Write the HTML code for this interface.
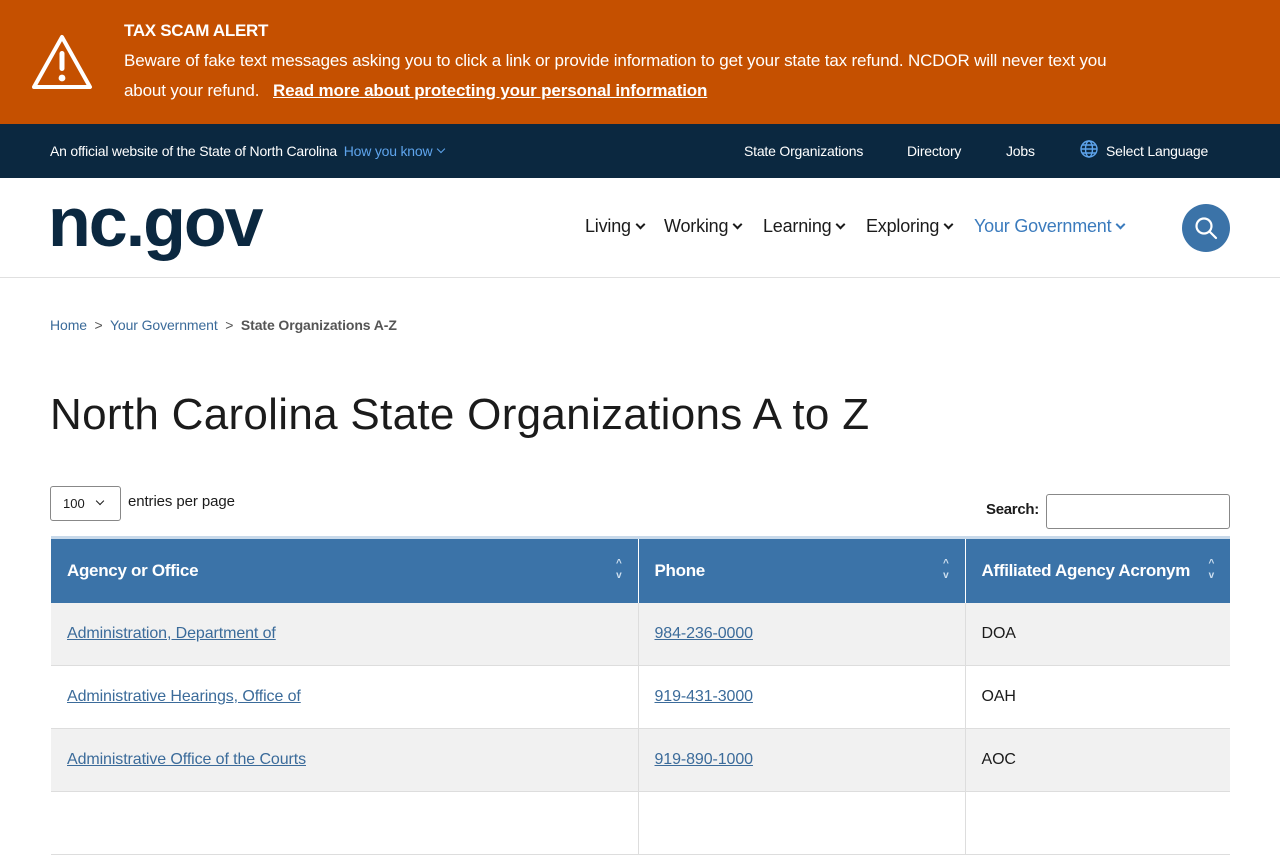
<!DOCTYPE html>
<html><head><meta charset="utf-8"><style>
*{box-sizing:border-box;margin:0;padding:0}
body{width:1280px;height:800px;overflow:hidden;font-family:"Liberation Sans",sans-serif;color:#1b1b1b;background:#fff;position:relative}
.abs{position:absolute;white-space:nowrap}
a{color:inherit}
.alert{position:absolute;left:0;top:0;width:1280px;height:124px;background:#c55000;color:#fff}
.util{position:absolute;left:0;top:124px;width:1280px;height:54px;background:#0b2840;color:#fff;font-size:14px;letter-spacing:-0.2px}
.hdr{position:absolute;left:0;top:178px;width:1280px;height:100px;border-bottom:1px solid #e0e0e0}
.nav{font-size:18px;letter-spacing:-0.2px;top:216px}
.chev{display:inline-block;width:7px;height:7px;border-right:2px solid currentColor;border-bottom:2px solid currentColor;transform:rotate(45deg);margin-left:6px;position:relative;top:-4px}
table{position:absolute;left:51px;top:536px;width:1179px;border-collapse:collapse;font-size:16px;letter-spacing:-0.1px}
th{background:#3b73a8;color:#fff;text-align:left;font-weight:bold;height:65px;padding:0 16px;border-top:3px solid #c8d9ea;border-right:1px solid #fff;position:relative;font-size:17px;letter-spacing:-0.3px}
th:last-child{border-right:0}
td{height:63px;padding:0 16px;border-right:1px solid #ddd;border-bottom:1px solid #ddd}
td:last-child{border-right:0}
tr.g td{background:#f1f1f1}
td a{color:#3b6b9a;text-decoration:underline}
.s{position:absolute;right:16px;top:19px;font-size:10px;line-height:12px;color:#cfe0f0;text-align:center}
</style></head><body>
<div class="alert">
<svg class="abs" style="left:30px;top:33px" width="64" height="58" viewBox="0 0 64 58"><path d="M32 4 L60 54 H4 Z" fill="none" stroke="#fff" stroke-width="4" stroke-linejoin="round"/><rect x="29.5" y="18" width="5" height="20" rx="2.5" fill="#fff"/><circle cx="32" cy="45" r="3.4" fill="#fff"/></svg>
<div class="abs" style="left:124px;top:21px;font-size:17px;font-weight:bold;letter-spacing:-0.3px">TAX SCAM ALERT</div>
<div class="abs" style="left:124px;top:51px;font-size:17px;letter-spacing:-0.15px">Beware of fake text messages asking you to click a link or provide information to get your state tax refund. NCDOR will never text you</div>
<div class="abs" style="left:124px;top:81px;font-size:17px;letter-spacing:-0.15px">about your refund. &nbsp; <a style="font-weight:bold;text-decoration:underline">Read more about protecting your personal information</a></div>
</div>
<div class="util">
<div class="abs" style="left:50px;top:19px">An official website of the State of North Carolina <a style="color:#5ea4ec;margin-left:3px">How you know</a><span class="chev" style="color:#5ea4ec;width:6px;height:6px;border-width:1px;margin-left:6px"></span></div>
<div class="abs" style="left:744px;top:19px">State Organizations</div>
<div class="abs" style="left:907px;top:19px">Directory</div>
<div class="abs" style="left:1006px;top:19px">Jobs</div>
<svg class="abs" style="left:1080px;top:16px" width="18" height="18" viewBox="0 0 18 18" fill="none" stroke="#5ea4ec" stroke-width="1.4"><circle cx="9" cy="9" r="8"/><ellipse cx="9" cy="9" rx="3.5" ry="8"/><path d="M1 9H17M2.5 5H15.5M2.5 13H15.5"/></svg>
<div class="abs" style="left:1106px;top:19px">Select Language</div>
</div>
<div class="hdr">
<div class="abs" style="left:48px;top:4px;font-size:70px;font-weight:bold;color:#0b2840;letter-spacing:-2px">nc.gov</div>
</div>
<div class="abs nav" style="left:585px">Living<span class="chev"></span></div>
<div class="abs nav" style="left:664px">Working<span class="chev"></span></div>
<div class="abs nav" style="left:763px">Learning<span class="chev"></span></div>
<div class="abs nav" style="left:866px">Exploring<span class="chev"></span></div>
<div class="abs nav" style="left:974px;color:#3b7bbd">Your Government<span class="chev"></span></div>
<div class="abs" style="left:1182px;top:204px;width:48px;height:48px;border-radius:50%;background:#3b73a8"></div>
<svg class="abs" style="left:1193px;top:215px" width="26" height="26" viewBox="0 0 26 26" fill="none" stroke="#fff" stroke-width="2.2"><circle cx="11" cy="11" r="7.5"/><path d="M16.5 16.5L23 23" stroke-linecap="round"/></svg>
<div class="abs" style="left:50px;top:317px;font-size:14px;letter-spacing:-0.1px;color:#555"><span style="color:#3b6b9a">Home</span> &nbsp;&gt;&nbsp; <span style="color:#3b6b9a">Your Government</span> &nbsp;&gt;&nbsp; <b>State Organizations A-Z</b></div>
<div class="abs" style="left:50px;top:390px;font-size:44px;letter-spacing:0.3px;color:#1b1b1b">North Carolina State Organizations A to Z</div>
<div class="abs" style="left:50px;top:486px;width:71px;height:35px;border:1px solid #888;border-radius:3px;font-size:13px;padding:9px 0 0 12px">100<span class="chev" style="width:6px;height:6px;border-width:1.5px;margin-left:12px"></span></div>
<div class="abs" style="left:128px;top:493px;font-size:15px;letter-spacing:-0.1px">entries per page</div>
<div class="abs" style="left:986px;top:501px;font-size:15px;font-weight:bold;letter-spacing:-0.3px">Search:</div>
<div class="abs" style="left:1046px;top:494px;width:184px;height:35px;border:1px solid #888;border-radius:3px"></div>
<table>
<tr><th style="width:587px">Agency or Office<div class="s">^<br>v</div></th><th style="width:327px">Phone<div class="s">^<br>v</div></th><th>Affiliated Agency Acronym<div class="s">^<br>v</div></th></tr>
<tr class="g"><td><a>Administration, Department of</a></td><td><a>984-236-0000</a></td><td>DOA</td></tr>
<tr><td><a>Administrative Hearings, Office of</a></td><td><a>919-431-3000</a></td><td>OAH</td></tr>
<tr class="g"><td><a>Administrative Office of the Courts</a></td><td><a>919-890-1000</a></td><td>AOC</td></tr>
<tr><td>&nbsp;</td><td></td><td></td></tr>
</table>
</body></html>
